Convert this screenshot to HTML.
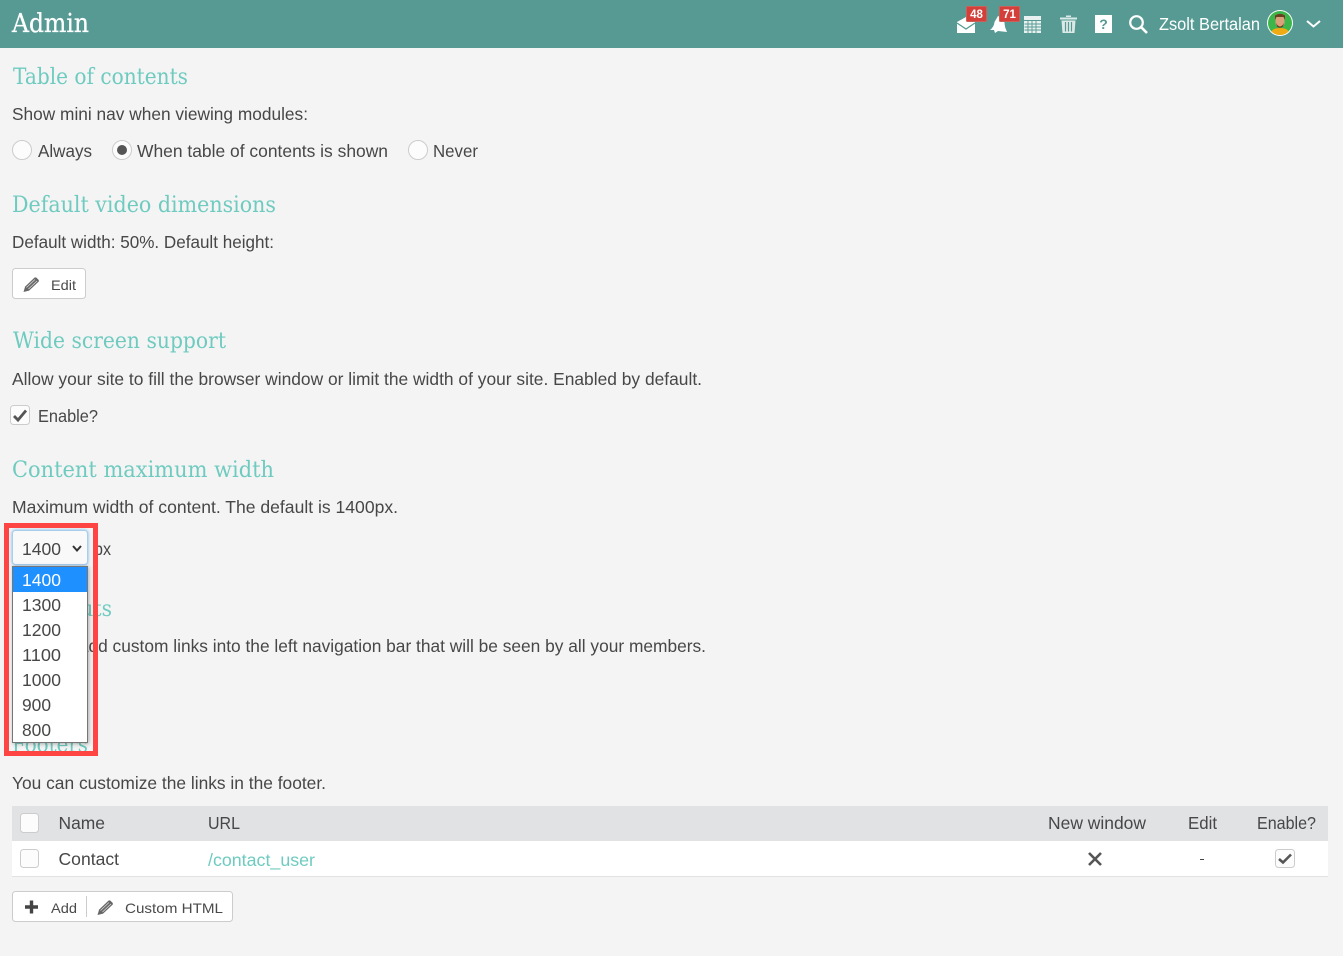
<!DOCTYPE html>
<html lang="en">
<head>
<meta charset="utf-8">
<title>Admin</title>
<style>
html,body{margin:0;padding:0;background:#f4f4f4;width:1343px;height:956px;overflow:hidden}
svg{display:block}
text{font-family:"Liberation Sans",sans-serif;font-size:17.5px;fill:#474747}
.h{font-family:"DejaVu Serif","Liberation Serif",serif;font-size:22.5px;fill:#6fcbc0}
.s{font-size:14px;fill:#4a4a4a}
.box{fill:#fcfcfc;stroke:#ccc;stroke-width:1}
</style>
</head>
<body>
<svg width="1343" height="956" viewBox="0 0 1343 956" xmlns="http://www.w3.org/2000/svg">
<defs>
<filter id="sh" x="-20%" y="-10%" width="140%" height="120%"><feDropShadow dx="1" dy="1" stdDeviation="2" flood-color="#000" flood-opacity=".3"/></filter>
<filter id="glow" x="-20%" y="-20%" width="140%" height="140%"><feDropShadow dx="0" dy="0" stdDeviation="1.5" flood-color="#66afe9" flood-opacity=".9"/></filter>
<g id="pencil">
<path d="M0 15L1.6 9.6 11 .6Q12 0 13 .8L15 2.8Q15.8 3.8 15 4.8L5.6 13.6Z" fill="#666"/>
<path d="M3 10.5L11.5 2.5M5 12L13.5 4" stroke="#ddd" stroke-width=".8" fill="none"/>
</g>
</defs>

<rect width="1343" height="956" fill="#f4f4f4"/>

<!-- Header -->
<rect width="1343" height="48" fill="#569a93"/>
<text x="12" y="32" class="h" style="font-size:26px;fill:#fff;stroke:#fff;stroke-width:.3" textLength="77" lengthAdjust="spacingAndGlyphs">Admin</text>

<!-- envelope -->
<path d="M957 22L966 17 975 22V33H957Z" fill="#fff"/>
<path d="M957 23L966 29 975 23" fill="none" stroke="#569a93" stroke-width="1.3"/>
<rect x="966.500" y="6.500" width="20" height="15" rx="1" fill="#d43f3a" stroke="#c9605a"/>
<text x="976.500" y="18" text-anchor="middle" style="font-size:11.500px;font-weight:bold;fill:#fff">48</text>

<!-- bell -->
<path d="M990 30Q994 27 994.500 22L998 16 1004 19 1005 27 1007 32 998 31 995 33 994 30Z" fill="#fff"/>
<rect x="999.500" y="6.500" width="20" height="15" rx="1" fill="#d43f3a" stroke="#c9605a"/>
<text x="1009.500" y="18" text-anchor="middle" style="font-size:11.500px;font-weight:bold;fill:#fff">71</text>

<!-- calendar -->
<rect x="1024" y="16" width="17" height="17" fill="#e8f1f0"/>
<path d="M1024 20.500H1041M1024.500 24H1041M1024.500 27H1041M1024.500 30H1041M1028 20V33M1032 20V33M1036 20V33" stroke="#569a93" stroke-width=".9"/>

<!-- trash -->
<path d="M1060 17.500H1077V19.500H1060ZM1066 15.500H1071V17H1066ZM1061.500 20.500H1075.500L1074.500 33H1062.500Z" fill="#dbe9e7"/>
<path d="M1065.500 22V31.500M1068.500 22V31.500M1071.500 22V31.500" stroke="#569a93" stroke-width="1.200"/>

<!-- help -->
<rect x="1095" y="15" width="17" height="18" fill="#fff"/>
<text x="1103.500" y="29" text-anchor="middle" style="font-size:14px;font-weight:bold;fill:#569a93">?</text>

<!-- search -->
<circle cx="1136.500" cy="22.500" r="6.300" fill="none" stroke="#fff" stroke-width="2.200"/>
<path d="M1141 27L1147 33" stroke="#fff" stroke-width="2.600"/>

<text x="1159" y="30" style="font-size:17.500px;fill:#fff" textLength="101" lengthAdjust="spacingAndGlyphs">Zsolt Bertalan</text>

<!-- avatar -->
<circle cx="1280" cy="23" r="13" fill="#fff"/>
<circle cx="1280" cy="23" r="12" fill="#3cb54a"/>
<path d="M1271.500 31.500Q1273 28 1280 28T1288.500 31.500Q1285 35 1280 35T1271.500 31.500Z" fill="#f0ab14"/>
<rect x="1275.500" y="15" width="9" height="12" rx="4" fill="#d9a27a"/>
<path d="M1275 20V15.500Q1280 12 1285 15.500V20L1283.500 17H1276.500Z" fill="#6b3f22"/>
<path d="M1276 23Q1280 30 1284 23L1283 26.500Q1280 29 1277 26.500Z" fill="#6b3f22"/>

<path d="M1307 21L1313.500 26.500 1320 21" fill="none" stroke="#fff" stroke-width="2"/>

<!-- Table of contents -->
<text x="13" y="84" class="h" textLength="175" lengthAdjust="spacingAndGlyphs">Table of contents</text>
<text x="12" y="120" textLength="296" lengthAdjust="spacingAndGlyphs">Show mini nav when viewing modules:</text>

<circle cx="22" cy="150" r="9.500" fill="#fcfcfc" stroke="#ccc"/>
<text x="38" y="157" textLength="54" lengthAdjust="spacingAndGlyphs">Always</text>
<circle cx="122" cy="150" r="9.500" fill="#fcfcfc" stroke="#ccc"/>
<circle cx="122" cy="150" r="5" fill="#555"/>
<text x="137" y="157" textLength="251" lengthAdjust="spacingAndGlyphs">When table of contents is shown</text>
<circle cx="418" cy="150" r="9.500" fill="#fcfcfc" stroke="#ccc"/>
<text x="433" y="157" textLength="45" lengthAdjust="spacingAndGlyphs">Never</text>

<!-- Default video dimensions -->
<text x="12" y="212" class="h" textLength="264" lengthAdjust="spacingAndGlyphs">Default video dimensions</text>
<text x="12" y="248" textLength="262" lengthAdjust="spacingAndGlyphs">Default width: 50%. Default height:</text>
<rect x="12.500" y="268.500" width="73" height="30" rx="3" fill="#fff" stroke="#ccc"/>
<use href="#pencil" x="23.500" y="277"/>
<text x="51" y="290" class="s" textLength="25" lengthAdjust="spacingAndGlyphs">Edit</text>

<!-- Wide screen support -->
<text x="13" y="348" class="h" textLength="213" lengthAdjust="spacingAndGlyphs">Wide screen support</text>
<text x="12" y="385" textLength="690" lengthAdjust="spacingAndGlyphs">Allow your site to fill the browser window or limit the width of your site. Enabled by default.</text>
<rect x="10.500" y="405.500" width="19" height="19" rx="3" class="box"/>
<path d="M14 416L18 420 26 410.500" fill="none" stroke="#555" stroke-width="2.800"/>
<text x="38" y="422" textLength="60" lengthAdjust="spacingAndGlyphs">Enable?</text>

<!-- Content maximum width -->
<text x="12" y="477" class="h" textLength="262" lengthAdjust="spacingAndGlyphs">Content maximum width</text>
<text x="12" y="513" textLength="386" lengthAdjust="spacingAndGlyphs">Maximum width of content. The default is 1400px.</text>
<text x="94" y="555" textLength="17" lengthAdjust="spacingAndGlyphs">px</text>

<!-- Hidden-behind section -->
<text x="12" y="616" class="h" textLength="100" lengthAdjust="spacingAndGlyphs">Shortcuts</text>
<text x="12" y="652" textLength="694" lengthAdjust="spacingAndGlyphs">You can add custom links into the left navigation bar that will be seen by all your members.</text>

<!-- Footers -->
<text x="12" y="752" class="h" textLength="76" lengthAdjust="spacingAndGlyphs">Footers</text>
<text x="12" y="789" textLength="314" lengthAdjust="spacingAndGlyphs">You can customize the links in the footer.</text>

<!-- Select -->
<rect x="12.500" y="530.500" width="75" height="34" rx="3" fill="#f9f9f9" stroke="#a9cdec" filter="url(#glow)"/>
<text x="22" y="555" textLength="39" lengthAdjust="spacingAndGlyphs">1400</text>
<path d="M73 546L77 550.500 81 546" fill="none" stroke="#333" stroke-width="2"/>

<!-- Dropdown -->
<rect x="12.500" y="566.500" width="75" height="176" fill="#fff" stroke="#767676" filter="url(#sh)"/>
<rect x="13" y="567" width="74" height="25" fill="#1e90ff"/>
<text x="22" y="586" style="fill:#fff" textLength="39" lengthAdjust="spacingAndGlyphs">1400</text>
<text x="22" y="611" textLength="39" lengthAdjust="spacingAndGlyphs">1300</text>
<text x="22" y="636" textLength="39" lengthAdjust="spacingAndGlyphs">1200</text>
<text x="22" y="661" textLength="39" lengthAdjust="spacingAndGlyphs">1100</text>
<text x="22" y="686" textLength="39" lengthAdjust="spacingAndGlyphs">1000</text>
<text x="22" y="711" textLength="29" lengthAdjust="spacingAndGlyphs">900</text>
<text x="22" y="736" textLength="29" lengthAdjust="spacingAndGlyphs">800</text>

<!-- Red frame -->
<rect x="6.500" y="525.500" width="89" height="228" fill="none" stroke="#ff4444" stroke-width="5"/>

<!-- Table -->
<rect x="12" y="806" width="1316" height="35" fill="#e1e2e4"/>
<rect x="12" y="841" width="1316" height="35" fill="#fff"/>
<rect x="12" y="876" width="1316" height="1" fill="#e1e2e4"/>
<rect x="20.500" y="813.500" width="18" height="19" rx="3" class="box"/>
<text x="58.500" y="829" textLength="46.500" lengthAdjust="spacingAndGlyphs">Name</text>
<text x="208" y="829" textLength="32" lengthAdjust="spacingAndGlyphs">URL</text>
<text x="1048" y="829" textLength="98" lengthAdjust="spacingAndGlyphs">New window</text>
<text x="1188" y="829" textLength="29" lengthAdjust="spacingAndGlyphs">Edit</text>
<text x="1257" y="829" textLength="59" lengthAdjust="spacingAndGlyphs">Enable?</text>

<rect x="20.500" y="849.500" width="18" height="18" rx="3" class="box"/>
<text x="58.500" y="865" textLength="60.500" lengthAdjust="spacingAndGlyphs">Contact</text>
<text x="208" y="866" style="fill:#6fcbc0" textLength="107" lengthAdjust="spacingAndGlyphs">/contact_user</text>
<path d="M1089 853L1101 865M1101 853L1089 865" stroke="#555" stroke-width="2.600"/>
<rect x="1200" y="859" width="4" height="1" fill="#444"/>
<rect x="1275.500" y="849.500" width="19" height="18" rx="3" class="box"/>
<path d="M1279 859L1283 862.500 1291 854.500" fill="none" stroke="#555" stroke-width="2.600"/>

<!-- Bottom buttons -->
<rect x="12.500" y="891.500" width="220" height="30" rx="3" fill="#fff" stroke="#ccc"/>
<path d="M25 907H38M31.500 900.500V913.500" stroke="#444" stroke-width="3.400"/>
<text x="51" y="913" class="s" textLength="26" lengthAdjust="spacingAndGlyphs">Add</text>
<rect x="86" y="896" width="1" height="21" fill="#ccc"/>
<use href="#pencil" x="97.500" y="900"/>
<text x="125" y="913" class="s" textLength="98" lengthAdjust="spacingAndGlyphs">Custom HTML</text>
</svg>
</body>
</html>
